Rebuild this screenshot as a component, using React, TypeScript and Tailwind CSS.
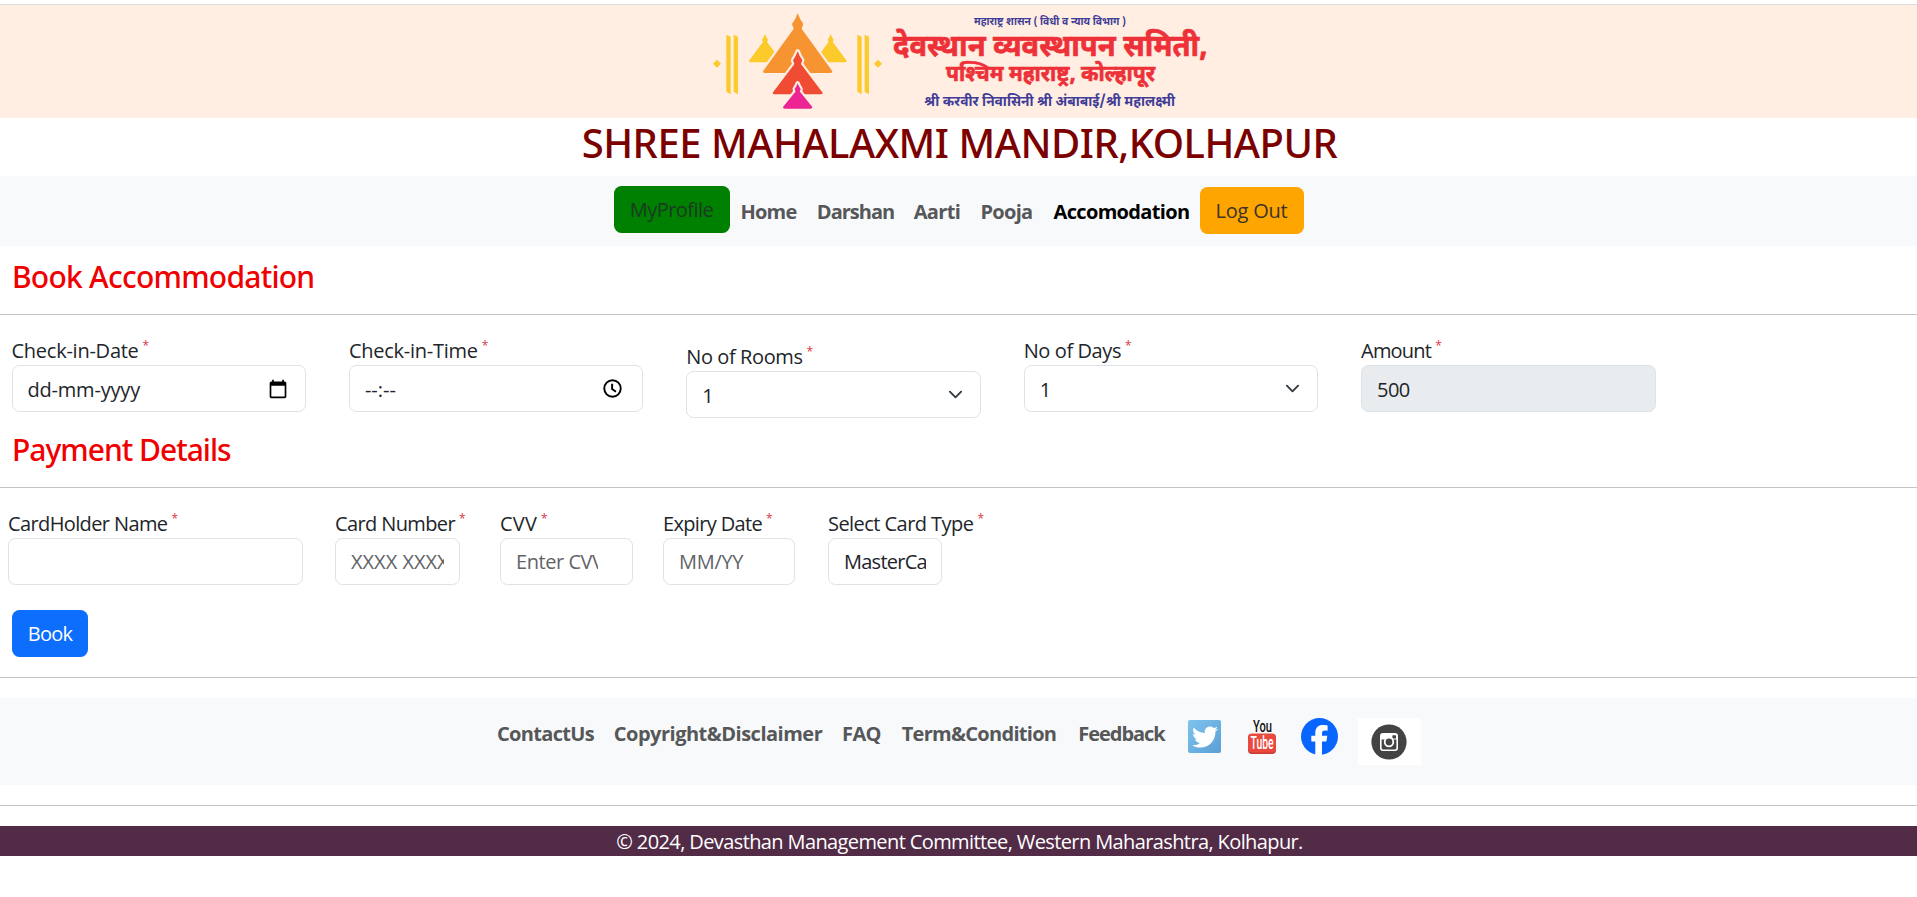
import type { ReactNode } from "react";
import { FaTwitter } from "react-icons/fa";

type SpireProps = {
  cx: number;
  tip: number;
  base: number;
  half: number;
  knob: number;
  fill: string;
  outline?: boolean;
};

function Spire({ cx, tip, base, half, knob, fill, outline }: SpireProps) {
  const shoulder = tip + knob * 1.9;
  const neck = tip + knob * 2.7;
  const d = [
    `M${cx} ${tip}`,
    `Q${cx + knob * 0.35} ${tip + knob} ${cx + knob} ${shoulder}`,
    `L${cx + knob * 0.7} ${neck}`,
    `L${cx + half} ${base - 5}`,
    `Q${cx + half} ${base} ${cx + half - 5} ${base}`,
    `H${cx - half + 5}`,
    `Q${cx - half} ${base} ${cx - half} ${base - 5}`,
    `L${cx - knob * 0.7} ${neck}`,
    `L${cx - knob} ${shoulder}`,
    `Q${cx - knob * 0.35} ${tip + knob} ${cx} ${tip}Z`,
  ].join("");
  return (
    <>
      {outline && <path d={d} fill="#ffeee1" stroke="#ffeee1" strokeWidth="13" strokeLinejoin="round" />}
      <path d={d} fill={fill} />
    </>
  );
}

function Logo() {
  const yellow = "#fdca2c";
  return (
    <svg className="h-[113px] w-[520px] overflow-visible" viewBox="0 15 1560 339" fontFamily="'Noto Sans Devanagari', 'Noto Sans', sans-serif" fontWeight="700">
      <g fill={yellow}>
        <path d="M51 179 63 191 51 203 39 191ZM534 179 546 191 534 203 522 191Z" />
        <path d="M79 104 92 110V283L79 275ZM101 104 114 110V283L101 275ZM472 104 485 110V283L472 275ZM494 104 507 110V283L494 275Z" />
      </g>
      <Spire cx={195} tip={102} base={187} half={48} knob={9} fill={yellow} />
      <Spire cx={392} tip={102} base={187} half={48} knob={9} fill={yellow} />
      <Spire cx={293} tip={40} base={219} half={104} knob={17} fill="#f79432" outline />
      <Spire cx={293} tip={154} base={283} half={75} knob={14} fill="#f04c33" outline />
      <Spire cx={293} tip={250} base={326} half={44} knob={9} fill="#ec2592" outline />
      <g fill="#3f3d97">
        <text x="822" y="76" fontSize="34" textLength="456" lengthAdjust="spacingAndGlyphs">महाराष्ट्र शासन ( विधी व न्याय विभाग )</text>
        <text x="673" y="318" fontSize="43" textLength="752" lengthAdjust="spacingAndGlyphs">श्री करवीर निवासिनी श्री अंबाबाई/श्री महालक्ष्मी</text>
      </g>
      <g fill="#ee3138" stroke="#ee3138" strokeWidth="2">
        <text x="579" y="167" fontSize="92" textLength="944" lengthAdjust="spacingAndGlyphs">देवस्थान व्यवस्थापन समिती,</text>
        <text x="738" y="243" fontSize="66" textLength="627" lengthAdjust="spacingAndGlyphs">{"पश्\u200Dचिम महाराष्ट्र, कोल्\u200Dहापूर"}</text>
      </g>
    </svg>
  );
}

function Label({ text, tracking }: { text: string; tracking: string }) {
  return (
    <label className="block h-[30px] whitespace-nowrap text-[20px] leading-[32px]">
      <span className={tracking}>{text}</span>
      <span className="relative -top-[8px] ml-[4px] text-[12px] leading-none text-[#dc3545]">*</span>
    </label>
  );
}

const control =
  "flex h-[47px] items-center rounded-[7.5px] border border-[#dee2e6] pl-[15px] text-[20px] text-[#212529] placeholder:text-[#5f6468] outline-none";

function Field({ className, label, tracking, children }: { className: string; label: string; tracking: string; children: ReactNode }) {
  return (
    <div className={className}>
      <Label text={label} tracking={tracking} />
      {children}
    </div>
  );
}

function SelectBox() {
  return (
    <div className={`${control} w-full justify-between pr-[17px]`}>
      <span className="pt-[2px]">1</span>
      <svg className="size-[15px]" viewBox="0 0 16 16" fill="none" stroke="#343a40" strokeWidth="2" strokeLinecap="round" strokeLinejoin="round">
        <path d="m2 5 6 6 6-6" />
      </svg>
    </div>
  );
}

function Rule() {
  return <hr className="h-px border-0 bg-[#c4c5c6]" />;
}

const navLinks = [
  { text: "Home", className: "w-[77px] tracking-[-0.75px] text-[#555759]" },
  { text: "Darshan", className: "w-[97px] tracking-[-1px] text-[#555759]" },
  { text: "Aarti", className: "w-[66px] tracking-[-0.6px] text-[#555759]" },
  { text: "Pooja", className: "w-[73px] tracking-[-0.7px] text-[#555759]" },
  { text: "Accomodation", className: "w-[157px] tracking-[-0.65px] text-black" },
];

const footerLinks = [
  { text: "ContactUs", className: "w-[116px] tracking-[-0.65px]" },
  { text: "Copyright&Disclaimer", className: "w-[229px] tracking-[-0.5px]" },
  { text: "FAQ", className: "w-[58px] tracking-[-0.6px]" },
  { text: "Term&Condition", className: "w-[177px] tracking-[-0.7px]" },
  { text: "Feedback", className: "w-[108px] tracking-[-1.05px]" },
];

function YouTubeIcon() {
  return (
    <svg className="ml-[27px] mt-px h-[35px] w-[28px] overflow-visible" viewBox="0 0 28 35" fontFamily="Roboto, sans-serif">
      <text x="5" y="12.5" fontSize="17" fontWeight="500" textLength="19" lengthAdjust="spacingAndGlyphs" fill="#111">You</text>
      <rect x="0" y="15" width="28" height="20" rx="4" fill="#c93a30" />
      <rect x="0" y="14.5" width="28" height="19" rx="4" fill="#e84a3f" />
      <text x="2.5" y="30.3" fontSize="18" fontWeight="500" textLength="23" lengthAdjust="spacingAndGlyphs" fill="#fff">Tube</text>
    </svg>
  );
}

function FacebookIcon() {
  return (
    <svg className="ml-[25px] size-[37px]" viewBox="0 0 37 37">
      <circle cx="18.5" cy="18.5" r="18.5" fill="#0866ff" />
      <path d="M14.3 37V23.6H10.3V17.7H14.3V15.2C14.3 9.4 17 6.9 22.3 6.9C24 6.9 25.6 7.1 26.6 7.4V12.7C26 12.6 25 12.6 24 12.6C21.7 12.6 21 13.5 21 15.8V17.7H26.3L25.4 23.6H21V37Z" fill="#fff" />
    </svg>
  );
}

function InstagramIcon() {
  return (
    <div className="ml-[20px] flex h-[47px] w-[63px] items-center justify-center bg-white pr-px">
      <svg className="size-[36px]" viewBox="0 0 36 36">
        <circle cx="18" cy="18" r="17.6" fill="#434343" />
        <rect x="9.8" y="9.8" width="16.4" height="16.4" rx="2.2" fill="none" stroke="#fff" strokeWidth="1.6" />
        <path d="M10 15.6V10H26V15.6H22.2A5.6 5.6 0 0 0 13.8 15.6Z" fill="#fff" />
        <rect x="21.4" y="11.2" width="3.6" height="3.4" rx=".5" fill="#434343" />
        <circle cx="18" cy="18" r="4.3" fill="#434343" stroke="#fff" strokeWidth="1.8" />
      </svg>
    </div>
  );
}

export default function App() {
  return (
    <div className="min-h-[897px] bg-white font-['Open_Sans','Noto_Sans',sans-serif] text-[#212529]">
      <div className="h-[5px] border-b border-[#dadcdc]" />
      <header className="flex h-[113px] justify-center bg-[#ffeee1] pl-[3px]">
        <Logo />
      </header>
      <h1 className="h-[58px] pl-[2px] text-center font-['Noto_Sans',sans-serif] text-[40px] font-medium leading-[50px] tracking-[-0.48px] text-[#7b0000]">
        SHREE MAHALAXMI MANDIR,KOLHAPUR
      </h1>

      <nav className="flex h-[70px] items-start justify-center bg-[#f8f9fa] pt-[10px] text-[20px] leading-[30px]">
        <button className="h-[47px] w-[116px] rounded-[7.5px] bg-[#008000] pt-px tracking-[-0.55px] text-[#1c3a22]">MyProfile</button>
        {navLinks.map((link) => (
          <a key={link.text} className={`mt-[11px] pl-px text-center font-bold ${link.className}`}>
            {link.text}
          </a>
        ))}
        <button className="mt-px h-[47px] w-[104px] rounded-[7.5px] bg-[#ffa500] pt-px tracking-[-0.2px] text-[#3a3428]">Log Out</button>
      </nav>

      <main>
        <h2 className="mb-[20px] mt-[12px] h-[36px] pl-[12px] font-['Noto_Sans',sans-serif] text-[30px] font-medium leading-[38px] tracking-[-0.75px] text-[#f00000]">
          Book Accommodation
        </h2>
        <Rule />
        <section className="flex h-[97px] items-start gap-[42.9px] pl-[11.5px] pt-[20px]">
          <Field className="w-[294.5px]" label="Check-in-Date" tracking="tracking-[-0.25px]">
            <div className={`${control} justify-between pr-[17px] tracking-[-0.2px]`}>
              <span className="pt-[2px]">dd-mm-yyyy</span>
              <svg className="size-[20px]" viewBox="0 0 24 24">
                <path d="M20 3h-1V1h-2v2H7V1H5v2H4c-1.1 0-2 .9-2 2v16c0 1.1.9 2 2 2h16c1.1 0 2-.9 2-2V5c0-1.1-.9-2-2-2zm0 18H4V8h16v13z" />
              </svg>
            </div>
          </Field>
          <Field className="w-[294.5px]" label="Check-in-Time" tracking="tracking-[-0.25px]">
            <div className={`${control} justify-between pr-[18px]`}>
              <span className="pt-[2px]">--:--</span>
              <svg className="size-[23px]" viewBox="0 0 24 24" fill="none" stroke="#000" strokeWidth="2">
                <circle cx="12" cy="12" r="8.6" />
                <path d="M11.6 7V12.5L15.6 15.4" />
              </svg>
            </div>
          </Field>
          <Field className="w-[294.5px] pt-[6px]" label="No of Rooms" tracking="tracking-[-0.4px]">
            <SelectBox />
          </Field>
          <Field className="w-[294.5px]" label="No of Days" tracking="tracking-[-0.4px]">
            <SelectBox />
          </Field>
          <Field className="w-[294.5px]" label="Amount" tracking="tracking-[-0.8px]">
            <input className={`${control} w-full bg-[#e9ecef] pt-[2px] tracking-[-0.6px]`} defaultValue="500" readOnly />
          </Field>
        </section>

        <h2 className="mb-[20px] mt-[19px] h-[36px] pl-[12px] font-['Noto_Sans',sans-serif] text-[30px] font-medium leading-[38px] tracking-[-1px] text-[#f00000]">
          Payment Details
        </h2>
        <Rule />
        <section className="flex h-[97px] items-start pl-[8px] pt-[20px]">
          <Field className="w-[327px]" label="CardHolder Name" tracking="tracking-[-0.62px]">
            <input className={`${control} w-[295px]`} />
          </Field>
          <Field className="w-[165px]" label="Card Number" tracking="tracking-[-0.62px]">
            <input className={`${control} w-[125px] pr-[15px]`} placeholder="XXXX XXXX XXXX XXXX" />
          </Field>
          <Field className="w-[163px]" label="CVV" tracking="tracking-[0.2px]">
            <input className={`${control} w-[133px] pr-[34px] tracking-[-0.45px]`} placeholder="Enter CVV" />
          </Field>
          <Field className="w-[165px]" label="Expiry Date" tracking="tracking-[-0.65px]">
            <input className={`${control} w-[132px] pr-[15px] tracking-[-0.3px]`} placeholder="MM/YY" />
          </Field>
          <Field className="w-[165px]" label="Select Card Type" tracking="tracking-[-0.55px]">
            <input className={`${control} w-[114px] pr-[15px] tracking-[-0.75px]`} defaultValue="MasterCard" readOnly />
          </Field>
        </section>
        <div className="h-[92px] pl-[12px] pt-[25px]">
          <button className="h-[47px] w-[76px] rounded-[7.5px] bg-[#0d6efd] text-[20px] leading-[30px] tracking-[-0.75px] text-white">Book</button>
        </div>
      </main>

      <Rule />
      <footer className="pt-[20px]">
        <div className="mb-[20px] flex h-[87px] items-start bg-[#f8f9fa] pl-[487px] pt-[20px] text-[20px]">
          {footerLinks.map((link) => (
            <a key={link.text} className={`pl-px text-center font-bold leading-[32px] text-[#555759] ${link.className}`}>
              {link.text}
            </a>
          ))}
          <div className="ml-[13px] mt-[2px] flex size-[33px] items-center justify-center rounded-[2px] bg-linear-to-br from-[#7fc4ee] to-[#5a9fd6]">
            <FaTwitter className="size-[26px] text-white" />
          </div>
          <YouTubeIcon />
          <FacebookIcon />
          <InstagramIcon />
        </div>
        <Rule />
        <p className="mt-[20px] h-[30px] bg-[#522b47] pl-[2px] text-center text-[20px] leading-[32px] tracking-[-0.61px] text-white">
          © 2024, Devasthan Management Committee, Western Maharashtra, Kolhapur.
        </p>
      </footer>
    </div>
  );
}
